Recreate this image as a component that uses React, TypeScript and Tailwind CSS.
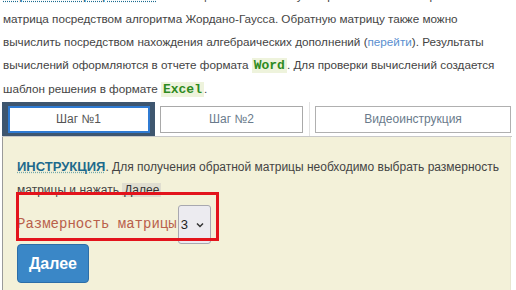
import React from "react";

const mono = { fontFamily: '"Liberation Mono", "Courier New", monospace' };

export default function App() {
  return (
    <div className="w-[516px] h-[290px] overflow-hidden bg-white" style={{ fontFamily: '"Liberation Sans", Arial, sans-serif' }}>
      <div className="pl-[3px] mt-[-16px] text-[11.7px] leading-[23px] text-[#444] whitespace-nowrap">
        <div>
          <span className="font-bold text-[#1a6b8f] underline decoration-dotted">Обратная матрица онлайн</span> с помощью онлайн калькулятора вычисляется обратная
        </div>
        <div>матрица посредством алгоритма Жордано-Гаусса. Обратную матрицу также можно</div>
        <div>
          вычислить посредством нахождения алгебраических дополнений (<span className="text-[#5a8fd0]">перейти</span>). Результаты
        </div>
        <div>
          вычислений оформляются в отчете формата{" "}
          <span className="bg-[#eef3dc] px-[2px] font-bold text-[#2e8b1f] text-[13px]" style={mono}>Word</span>. Для проверки вычислений создается
        </div>
        <div>
          шаблон решения в формате{" "}
          <span className="bg-[#eef3dc] px-[2px] font-bold text-[#2e8b1f] text-[13px]" style={mono}>Excel</span>.
        </div>
      </div>

      <div className="mt-[1px] ml-[2px] w-[510px] flex h-[35px] border-b border-[#c8c8c8]">
        <div className="w-[153px] bg-[#3e566f] flex items-center justify-center">
          <div className="w-[142px] h-[27px] bg-white border-2 border-[#2f7bd3] flex items-center justify-center text-[12px] text-[#555]">Шаг №1</div>
        </div>
        <div className="w-[155px] border-r border-[#e2e2e2] flex items-center pl-[5px]">
          <div className="w-[143px] h-[27px] bg-white border border-[#a9a9a9] flex items-center justify-center text-[12px] text-[#6a7b8c]">Шаг №2</div>
        </div>
        <div className="flex-1 flex items-center pl-[5px]">
          <div className="w-[196px] h-[27px] bg-white border border-[#b0b0b0] flex items-center justify-center text-[12px] text-[#6a7b8c]">Видеоинструкция</div>
        </div>
      </div>

      <div className="relative ml-[2px] w-[509px] h-[155px] bg-[#f3f1d9] border-l border-[#9a9a9a] border-r border-r-[#e8e6d0] pl-[14px] pt-[18px]">
        <div className="text-[12px] leading-[23px] text-[#444] whitespace-nowrap">
          <div>
            <span className="font-bold text-[13px] text-[#1d6a8c] underline decoration-dotted decoration-[#7aa]">ИНСТРУКЦИЯ</span>. Для получения обратной матрицы необходимо выбрать размерность
          </div>
          <div>
            матрицы и нажать <span className="bg-[#e0ded0] px-[2px] text-[#333]">Далее</span>
          </div>
        </div>
        <div className="flex items-center mt-[3px] h-[39px]">
          <span className="text-[14px] text-[#b9604b]" style={mono}>Размерность матрицы</span>
          <div className="ml-[1px] w-[33px] h-[39px] rounded-[3px] border border-[#a8a8b0] bg-[#ecebf0] flex items-center justify-between pl-[2px] pr-[6px] text-[13px] text-[#222]">
            <span>3</span>
            <svg width="8" height="6" viewBox="0 0 8 6"><path d="M1 1.5 L4 4.5 L7 1.5" stroke="#333" strokeWidth="1.5" fill="none" /></svg>
          </div>
        </div>
        <div className="w-[72px] h-[39px] rounded-[4px] bg-[#3a87c7] border border-[#2c6ea8] flex items-center justify-center text-white font-bold text-[16px]">Далее</div>
        <div className="absolute left-[13px] top-[55px] w-[203px] h-[49px] border-[3px] border-[#e3141c]" />
      </div>
    </div>
  );
}
